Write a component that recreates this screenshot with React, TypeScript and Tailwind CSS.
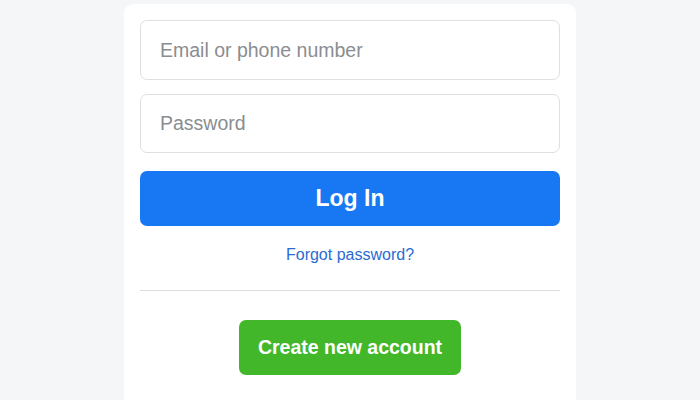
import React from 'react';

const App: React.FC = () => {
  return (
    <div className="h-screen overflow-hidden bg-[#f5f6f8] flex justify-center pt-[4px] font-['Liberation_Sans',Arial,sans-serif]">
      <div className="w-[452px] h-[420px] bg-white rounded-t-[9px] px-4 pt-4">
        {/* Login form */}
        <input
          type="text"
          placeholder="Email or phone number"
          className="block w-full h-[60px] border border-[#dddfe2] rounded-[7px] px-[19px] text-[19.5px] text-[#1c1e21] placeholder:text-[#8a8d91] outline-none"
        />
        <input
          type="password"
          placeholder="Password"
          className="block w-full h-[59px] mt-[14px] border border-[#dddfe2] rounded-[7px] px-[19px] text-[19.5px] text-[#1c1e21] placeholder:text-[#8a8d91] outline-none"
        />
        <button className="block w-full h-[55px] mt-[18px] bg-[#1877f2] rounded-[7px] text-white text-[23px] font-bold">
          Log In
        </button>
        <div className="mt-[17px] text-center">
          <a href="#" className="text-[16px] text-[#2a6bd1]">
            Forgot password?
          </a>
        </div>
        <div className="mt-[23px] border-t border-[#dadde1]" />
        <div className="flex justify-center mt-[29px]">
          <button className="h-[55px] px-[19px] bg-[#42b72a] rounded-[7px] text-white text-[19.5px] font-bold">
            Create new account
          </button>
        </div>
      </div>
    </div>
  );
};

export default App;
